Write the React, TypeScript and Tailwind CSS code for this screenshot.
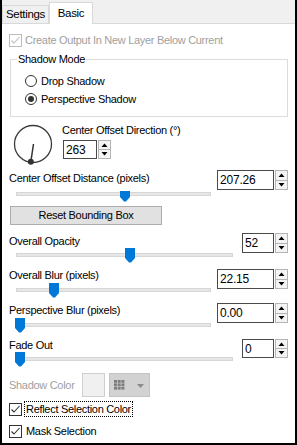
import React from "react";

function Tri({ up }: { up: boolean }) {
  return (
    <svg width="7" height="4" viewBox="0 0 7 4">
      {up ? (
        <polygon points="0.5,4 3.5,0.5 6.5,4" fill="#000" />
      ) : (
        <polygon points="0.5,0 3.5,3.5 6.5,0" fill="#000" />
      )}
    </svg>
  );
}

function Spin({ value, fieldW, h }: { value: string; fieldW: string; h: string }) {
  return (
    <div className={`flex ${h}`}>
      <div
        className={`${fieldW} h-full border border-[#4a4a4a] bg-white flex items-center pl-[2px] text-[12px] tracking-[-0.2px] leading-none`}
      >
        {value}
      </div>
      <div className="w-[13px] h-full flex flex-col ml-px">
        <div className="flex-1 border border-[#b4b4b4] bg-[#f4f4f4] flex items-center justify-center">
          <Tri up />
        </div>
        <div className="flex-1 border border-t-0 border-[#b4b4b4] bg-[#f4f4f4] flex items-center justify-center">
          <Tri up={false} />
        </div>
      </div>
    </div>
  );
}

function Slider({ w, thumb, cut = 0, mt }: { w: string; thumb: number; cut?: number; mt: string }) {
  return (
    <div className={`relative ${w} h-[15px] ml-[13px] ${mt}`}>
      <div className="mt-[5px] mx-px h-[4px] bg-[#e7e7e7] border border-[#d6d6d6]" />
      <svg
        className="absolute top-0"
        style={{ left: thumb }}
        width="10"
        height="15"
        viewBox="0 0 10 15"
      >
        <polygon points={`0,${cut} 10,${cut} 10,10 6,14.5 4,14.5 0,10`} fill="#0078d7" />
      </svg>
    </div>
  );
}

function Check({ disabled }: { disabled?: boolean }) {
  const c = disabled ? "#bcbcbc" : "#333333";
  return (
    <div
      className={`w-[13px] h-[13px] shrink-0 border ${disabled ? "border-[#bcbcbc]" : "border-[#333333]"} bg-white flex items-center justify-center`}
    >
      <svg width="11" height="11" viewBox="0 0 11 11">
        <polyline points="1.5,5.5 4,8 9.5,2" fill="none" stroke={c} strokeWidth="1.1" />
      </svg>
    </div>
  );
}

function Radio({ checked }: { checked?: boolean }) {
  return (
    <div className="w-[12px] h-[12px] rounded-full border border-[#333333] bg-white flex items-center justify-center shrink-0">
      {checked && <div className="w-[6px] h-[6px] rounded-full bg-[#333333]" />}
    </div>
  );
}

function Dial() {
  const a = (263 * Math.PI) / 180;
  const x = 20 + Math.cos(a) * 18;
  const y = 20 - Math.sin(a) * 18;
  return (
    <svg width="41" height="41" viewBox="0 0 41 41" className="ml-[11px] mt-[2px] shrink-0">
      <circle cx="20" cy="20" r="18.5" fill="none" stroke="#3a3a3a" strokeWidth="1.3" />
      <line x1="20.5" y1="20" x2={x} y2={y} stroke="#333" strokeWidth="1.5" />
      <circle cx={x} cy={y} r="3" fill="#333" />
    </svg>
  );
}

export default function App() {
  return (
    <div className="w-[297px] h-[445px] bg-white border-l-2 border-r-2 border-b-2 border-black flex flex-col font-['Liberation_Sans',Arial,sans-serif] text-[11px] tracking-[-0.3px] text-black overflow-hidden">
      {/* Tabs */}
      <div className="h-[24px] shrink-0 bg-[#f0f0f0] border-b border-[#d9d9d9] flex items-end">
        <div className="w-[47px] h-[18px] border border-b-0 border-[#d9d9d9] bg-[#f0f0f0] flex items-center justify-center text-[11.5px]">
          Settings
        </div>
        <div className="w-[44px] h-[22px] border border-b-0 border-[#d9d9d9] bg-white -mb-px flex items-center justify-center text-[11.5px]">
          Basic
        </div>
      </div>

      {/* Create output checkbox */}
      <div className="mt-[10px] h-[13px] flex items-center ml-[7px]">
        <Check disabled />
        <span className="ml-[3px] text-[#a0a0a0]">Create Output In New Layer Below Current</span>
      </div>

      {/* Shadow Mode group */}
      <fieldset className="mt-[5px] ml-[8px] w-[278px] border border-[#dcdcdc] pb-[9px]">
        <legend className="ml-[6px] px-px h-[14px] leading-[14px]">Shadow Mode</legend>
        <div className="mt-[7px] pl-[14px] h-[16px] flex items-center">
          <Radio />
          <span className="ml-[4px]">Drop Shadow</span>
        </div>
        <div className="mt-[2px] pl-[14px] h-[16px] flex items-center">
          <Radio checked />
          <span className="ml-[4px]">Perspective Shadow</span>
        </div>
      </fieldset>

      {/* Dial */}
      <div className="mt-[5px] flex">
        <Dial />
        <div className="ml-[8px] flex flex-col">
          <div className="h-[16px] leading-[16px]">Center Offset Direction (°)</div>
          <div className="mt-[2px] ml-px">
            <Spin value="263" fieldW="w-[34px]" h="h-[19px]" />
          </div>
        </div>
      </div>

      {/* Distance */}
      <div className="flex mt-[5px]">
        <div className="flex flex-col">
          <div className="ml-[7px] h-[16px] leading-[16px]">Center Offset Distance (pixels)</div>
          <Slider w="w-[197px]" thumb={105} cut={4} mt="mt-px" />
        </div>
        <div className="ml-auto mr-[7px]">
          <Spin value="207.26" fieldW="w-[57px]" h="h-[20px]" />
        </div>
      </div>

      {/* Reset */}
      <div className="mt-[4px] ml-[8px] w-[152px] h-[19px] bg-[#e1e1e1] border border-[#adadad] flex items-center justify-center">
        Reset Bounding Box
      </div>

      {/* Opacity */}
      <div className="flex mt-[8px]">
        <div className="flex flex-col">
          <div className="ml-[7px] h-[16px] leading-[16px]">Overall Opacity</div>
          <Slider w="w-[219px]" thumb={110} mt="-mt-px" />
        </div>
        <div className="ml-auto mr-[7px]">
          <Spin value="52" fieldW="w-[32px]" h="h-[20px]" />
        </div>
      </div>

      {/* Blur */}
      <div className="flex mt-[4px]">
        <div className="flex flex-col">
          <div className="ml-[7px] h-[16px] leading-[16px]">Overall Blur (pixels)</div>
          <Slider w="w-[197px]" thumb={34} mt="mt-0" />
        </div>
        <div className="ml-auto mr-[7px] mt-[2px]">
          <Spin value="22.15" fieldW="w-[57px]" h="h-[20px]" />
        </div>
      </div>

      {/* Perspective blur */}
      <div className="flex mt-[4px]">
        <div className="flex flex-col">
          <div className="ml-[7px] h-[16px] leading-[16px]">Perspective Blur (pixels)</div>
          <Slider w="w-[197px]" thumb={0} mt="mt-0" />
        </div>
        <div className="ml-auto mr-[7px] mt-px">
          <Spin value="0.00" fieldW="w-[57px]" h="h-[20px]" />
        </div>
      </div>

      {/* Fade out */}
      <div className="flex mt-[4px]">
        <div className="flex flex-col">
          <div className="ml-[7px] h-[16px] leading-[16px]">Fade Out</div>
          <Slider w="w-[219px]" thumb={0} mt="-mt-px" />
        </div>
        <div className="ml-auto mr-[7px] mt-[2px]">
          <Spin value="0" fieldW="w-[32px]" h="h-[19px]" />
        </div>
      </div>

      {/* Shadow color */}
      <div className="mt-[6px] h-[24px] flex items-center">
        <div className="ml-[7px] w-[73px] text-[#a0a0a0]">Shadow Color</div>
        <div className="w-[23px] h-[24px] bg-[#f0f0f0] border border-[#cfcfcf]" />
        <div className="ml-[4px] w-[41px] h-[24px] bg-[#d2d2d2] border border-[#c4c4c4] flex items-center pl-[4px]">
          <svg width="11" height="10" viewBox="0 0 11 10">
            {[0, 1, 2].map((r) =>
              [0, 1, 2].map((c) => (
                <rect key={`${r}-${c}`} x={c * 3.7} y={r * 3.4} width="3" height="2.8" fill="#7d7d7d" />
              ))
            )}
          </svg>
          <svg width="7" height="4" viewBox="0 0 7 4" className="ml-[12px] mt-[2px]">
            <polygon points="0,0 7,0 3.5,4" fill="#8a8a8a" />
          </svg>
        </div>
      </div>

      {/* Reflect selection color */}
      <div className="mt-[4px] h-[16px] flex items-center ml-[7px]">
        <Check />
        <span className="ml-[2px] h-[16px] leading-[14px] px-px border border-dotted border-black">
          Reflect Selection Color
        </span>
      </div>

      {/* Mask selection */}
      <div className="mt-[6px] h-[16px] flex items-center ml-[7px]">
        <Check />
        <span className="ml-[2px] h-[16px] leading-[14px] px-px border border-transparent">Mask Selection</span>
      </div>
    </div>
  );
}
